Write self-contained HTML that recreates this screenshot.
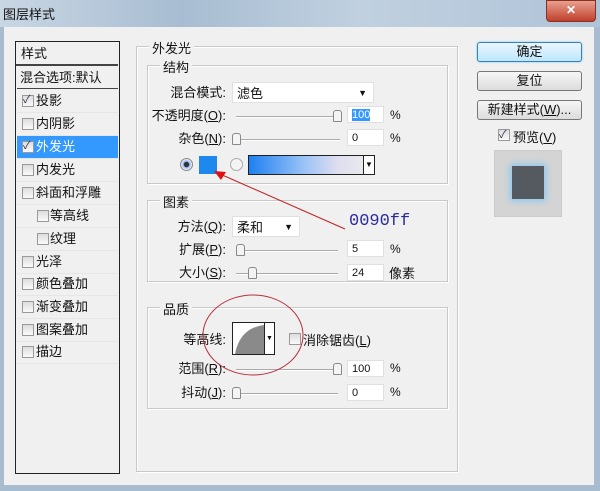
<!DOCTYPE html><html><head><meta charset="utf-8"><style>
body{margin:0;width:600px;height:491px;overflow:hidden;position:relative;background:#f0f0f0;font-family:"Liberation Sans","Noto Sans CJK SC",sans-serif;font-size:12px;color:#111}
.a{position:absolute;white-space:nowrap}
.box{position:absolute;border:1px solid #c8c8c8;box-shadow:1px 1px 0 #fff inset,1px 1px 0 #fff}
.lg{position:absolute;background:#f0f0f0;padding:0 3px;font-size:13px}
.in{position:absolute;background:#fff;border:1px solid #e0e0e0;height:17px;font-size:11px;line-height:17px;padding-left:4px;box-sizing:border-box}
.tr{position:absolute;height:1px;background:#aaa;border-bottom:1px solid #fff}
.th{position:absolute;width:7px;height:10px;border:1px solid #888;border-radius:3px 3px 1px 1px;background:#f4f4f4}
.cb{position:absolute;width:10px;height:10px;border:1px solid #999;background:linear-gradient(#ddd,#fafafa)}
.row{position:absolute;left:17px;width:101px;height:22px;line-height:22px;border-bottom:1px solid #e6e6e6;font-size:13px}
.row .cb{top:5px}
.btn{position:absolute;left:477px;width:103px;height:18px;border:1px solid #777;border-radius:3px;background:linear-gradient(#f6f6f6,#dcdcdc);text-align:center;line-height:18px;font-size:13px}
.r{text-align:right;font-size:13px;margin-top:-3px}
</style></head><body>
<div class="a" style="left:0;top:0;width:600px;height:27px;background:linear-gradient(90deg,#c9d6e4,#a8bdd2 30%,#c0d0e0 60%,#b0c4d8)"></div>
<div class="a" style="left:3px;top:4px;font-size:13px">图层样式</div>
<div class="a" style="left:546px;top:0;width:48px;height:20px;background:linear-gradient(#e8a090,#c0402c);border-radius:0 0 4px 4px;border:1px solid #8a3020;color:#fff;text-align:center;font-weight:bold;line-height:18px">✕</div>
<div class="a" style="left:0;top:27px;width:4px;height:464px;background:#a8bcd0"></div>
<div class="a" style="left:594px;top:27px;width:6px;height:464px;background:#a8bcd0"></div>
<div class="a" style="left:0;top:485px;width:600px;height:6px;background:#a8bcd0"></div>

<div class="a" style="left:15px;top:41px;width:103px;height:431px;border:1px solid #222;background:#f0f0f0"></div>
<div class="a" style="left:16px;top:42px;width:102px;height:24px;border-bottom:2px solid #444;line-height:24px;font-size:13px;padding-left:5px;box-sizing:border-box">样式</div>
<div class="row" style="top:67px;padding-left:3px;box-sizing:border-box;border-bottom:1px solid #444">混合选项:默认</div>
<div class="row" style="top:90px"><div class="cb" style="left:5px"></div><span style="position:absolute;left:19px">投影</span><span style="position:absolute;left:6px;top:-1px;font-size:11px;color:#335">✓</span></div>
<div class="row" style="top:113px"><div class="cb" style="left:5px"></div><span style="position:absolute;left:19px">内阴影</span></div>
<div class="row" style="top:136px;background:#3399ff;color:#fff"><div class="cb" style="left:5px"></div><span style="position:absolute;left:6px;top:-1px;font-size:11px;color:#335">✓</span><span style="position:absolute;left:19px">外发光</span></div>
<div class="row" style="top:159px"><div class="cb" style="left:5px"></div><span style="position:absolute;left:19px">内发光</span></div>
<div class="row" style="top:182px"><div class="cb" style="left:5px"></div><span style="position:absolute;left:19px">斜面和浮雕</span></div>
<div class="row" style="top:205px"><div class="cb" style="left:20px"></div><span style="position:absolute;left:33px">等高线</span></div>
<div class="row" style="top:228px"><div class="cb" style="left:20px"></div><span style="position:absolute;left:33px">纹理</span></div>
<div class="row" style="top:251px"><div class="cb" style="left:5px"></div><span style="position:absolute;left:19px">光泽</span></div>
<div class="row" style="top:273px"><div class="cb" style="left:5px"></div><span style="position:absolute;left:19px">颜色叠加</span></div>
<div class="row" style="top:296px"><div class="cb" style="left:5px"></div><span style="position:absolute;left:19px">渐变叠加</span></div>
<div class="row" style="top:319px"><div class="cb" style="left:5px"></div><span style="position:absolute;left:19px">图案叠加</span></div>
<div class="row" style="top:341px"><div class="cb" style="left:5px"></div><span style="position:absolute;left:19px">描边</span></div>

<div class="box" style="left:136px;top:46px;width:320px;height:424px"></div>
<div class="lg" style="left:149px;top:38px">外发光</div>
<div class="box" style="left:147px;top:65px;width:299px;height:117px"></div>
<div class="lg" style="left:160px;top:57px">结构</div>
<div class="a r" style="left:140px;width:86px;top:85px">混合模式:</div>
<div class="in" style="left:232px;top:82px;width:142px;height:21px;line-height:21px;font-size:13px">滤色<span style="position:absolute;right:6px;font-size:9px">▼</span></div>
<div class="a r" style="left:140px;width:86px;top:108px">不透明度(<u>O</u>):</div>
<div class="tr" style="left:236px;top:116px;width:104px"></div><div class="th" style="left:333px;top:110px"></div>
<div class="in" style="left:347px;top:106px;width:37px"><span style="background:#3399ff;color:#fff">100</span></div><div class="a" style="left:390px;top:108px">%</div>
<div class="a r" style="left:140px;width:86px;top:131px">杂色(<u>N</u>):</div>
<div class="tr" style="left:236px;top:139px;width:104px"></div><div class="th" style="left:232px;top:133px"></div>
<div class="in" style="left:347px;top:129px;width:37px">0</div><div class="a" style="left:390px;top:131px">%</div>
<div class="a" style="left:180px;top:158px;width:11px;height:11px;border-radius:50%;border:1px solid #888;background:radial-gradient(#333 30%,#9bf 40%,#eee 70%)"></div>
<div class="a" style="left:199px;top:156px;width:18px;height:18px;background:#1e88ee"></div>
<div class="a" style="left:230px;top:158px;width:11px;height:11px;border-radius:50%;border:1px solid #aaa;background:#f4f4f4"></div>
<div class="a" style="left:248px;top:155px;width:125px;height:18px;border:1px solid #222;background:linear-gradient(90deg,#1e80f0,#9cc4f6 45%,#dde 70%,#eee)"><span style="position:absolute;right:0;top:0;width:10px;height:18px;background:#fff;border-left:1px solid #222;font-size:8px;text-align:center;line-height:18px">▼</span></div>

<div class="box" style="left:147px;top:200px;width:299px;height:80px"></div>
<div class="lg" style="left:160px;top:192px">图素</div>
<div class="a r" style="left:140px;width:86px;top:219px">方法(<u>Q</u>):</div>
<div class="in" style="left:232px;top:216px;width:68px;height:21px;line-height:21px;font-size:13px">柔和<span style="position:absolute;right:6px;font-size:9px">▼</span></div>
<div class="a" style="left:349px;top:212px;font-family:'Liberation Mono',monospace;font-size:17px;color:#2a2aa0">0090ff</div>
<div class="a r" style="left:140px;width:86px;top:242px">扩展(<u>P</u>):</div>
<div class="tr" style="left:236px;top:250px;width:102px"></div><div class="th" style="left:236px;top:244px"></div>
<div class="in" style="left:347px;top:240px;width:37px">5</div><div class="a" style="left:390px;top:242px">%</div>
<div class="a r" style="left:140px;width:86px;top:265px">大小(<u>S</u>):</div>
<div class="tr" style="left:236px;top:273px;width:102px"></div><div class="th" style="left:248px;top:267px"></div>
<div class="in" style="left:347px;top:264px;width:37px">24</div><div class="a" style="left:389px;top:263px;font-size:13px">像素</div>

<div class="box" style="left:147px;top:307px;width:299px;height:100px"></div>
<div class="lg" style="left:160px;top:299px">品质</div>
<div class="a r" style="left:140px;width:86px;top:332px">等高线:</div>
<div class="a" style="left:232px;top:322px;width:41px;height:31px;border:1px solid #222;background:#fff">
<svg width="31" height="31" style="position:absolute;left:1px;top:1px"><path d="M1 30 Q6 4 30 1 L30 30 Z" fill="#8a8a8a"/></svg>
<span style="position:absolute;right:0;top:0;width:9px;height:31px;border-left:1px solid #222;font-size:7px;text-align:center;line-height:31px">▼</span></div>
<div class="cb" style="left:289px;top:333px"></div><div class="a" style="left:303px;top:330px;font-size:13px">消除锯齿(<u>L</u>)</div>
<div class="a r" style="left:140px;width:86px;top:361px">范围(<u>R</u>):</div>
<div class="tr" style="left:236px;top:369px;width:102px"></div><div class="th" style="left:333px;top:363px"></div>
<div class="in" style="left:347px;top:360px;width:37px">100</div><div class="a" style="left:390px;top:361px">%</div>
<div class="a r" style="left:140px;width:86px;top:385px">抖动(<u>J</u>):</div>
<div class="tr" style="left:236px;top:393px;width:102px"></div><div class="th" style="left:232px;top:387px"></div>
<div class="in" style="left:347px;top:384px;width:37px">0</div><div class="a" style="left:390px;top:385px">%</div>

<svg class="a" style="left:0;top:0" width="600" height="491"><ellipse cx="253" cy="335" rx="50" ry="40" fill="none" stroke="#b83040" stroke-width="1"/><line x1="345" y1="229" x2="220" y2="174" stroke="#c02020" stroke-width="1"/><path d="M214 171 L226 172 L221 180 Z" fill="#e01010"/></svg>

<div class="btn" style="top:42px;border-color:#3c7fb1;background:linear-gradient(#eaf6fd,#bee6fd);box-shadow:0 0 2px #6cf">确定</div>
<div class="btn" style="top:71px">复位</div>
<div class="btn" style="top:100px">新建样式(<u>W</u>)...</div>
<div class="cb" style="left:498px;top:129px"></div><span class="a" style="left:499px;top:126px;font-size:11px;color:#335">✓</span>
<div class="a" style="left:513px;top:127px;font-size:13px">预览(<u>V</u>)</div>
<div class="a" style="left:494px;top:150px;width:66px;height:65px;background:#d4d4d4;border:1px solid #ccc"></div>
<div class="a" style="left:512px;top:166px;width:32px;height:33px;background:#555a60;box-shadow:0 0 6px 2px #8cc8f0"></div>
</body></html>
